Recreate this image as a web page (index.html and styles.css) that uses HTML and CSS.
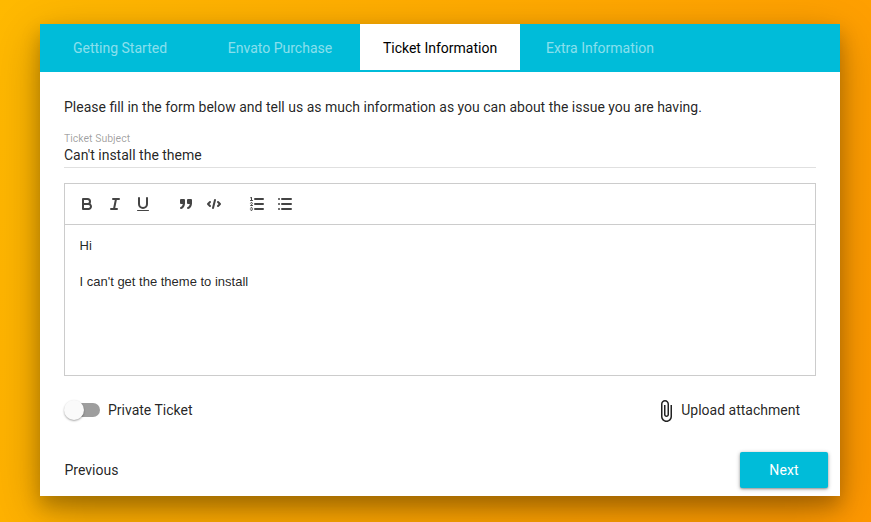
FILE: index.html
```html
<!DOCTYPE html>
<html lang="en">
<head>
<meta charset="utf-8">
<title>Ticket Information</title>
<link rel="stylesheet" href="styles.css">
</head>
<body>
<main class="card">
  <nav class="tabs">
    <a class="tab">Getting Started</a>
    <a class="tab">Envato Purchase</a>
    <a class="tab active">Ticket Information</a>
    <a class="tab">Extra Information</a>
  </nav>
  <section class="content">
    <p class="intro">Please fill in the form below and tell us as much information as you can about the issue you are having.</p>
    <div class="field">
      <div class="label">Ticket Subject</div>
      <div class="value">Can't install the theme</div>
    </div>
    <div class="editor">
      <div class="toolbar">
        <div class="group">
          <span class="tool"><svg viewBox="0 0 18 18"><path d="M5,4H9.5A2.5,2.5,0,0,1,12,6.5v0A2.5,2.5,0,0,1,9.5,9H5A0,0,0,0,1,5,9V4A0,0,0,0,1,5,4Z"/><path d="M5,9h5.5A2.5,2.5,0,0,1,13,11.5v0A2.5,2.5,0,0,1,10.500,14H5A0,0,0,0,1,5,14V9A0,0,0,0,1,5,9Z"/></svg></span>
          <span class="tool"><svg viewBox="0 0 18 18"><path d="M7 4H13M5 14H11M8 14L10 4"/></svg></span>
          <span class="tool"><svg viewBox="0 0 18 18"><path d="M5,3V9a4.012,4.012,0,0,0,4,4H9a4.012,4.012,0,0,0,4-4V3"/><rect class="fill" x="3" y="15" width="12" height="1" rx=".5"/></svg></span>
        </div>
        <div class="group">
          <span class="tool"><svg viewBox="0 0 18 18"><rect class="both" x="4" y="5" width="3" height="3"/><rect class="both" x="11" y="5" width="3" height="3"/><path class="both-even" d="M7,8c0,4.031-3,5-3,5"/><path class="both-even" d="M14,8c0,4.031-3,5-3,5"/></svg></span>
          <span class="tool"><svg viewBox="0 0 18 18"><path d="M5 7L3 9L5 11M13 7L15 9L13 11M10 5L8 13"/></svg></span>
        </div>
        <div class="group">
          <span class="tool"><svg viewBox="0 0 18 18"><path d="M7 4H15M7 9H15M7 14H15"/><path class="thin" d="M2.500 5.500H4.500"/><path class="fill" d="M3.500,6A0.500,0.500,0,0,1,3,5.500V3.085l-0.276.138A0.500,0.500,0,0,1,2.053,3c-0.124-.247-0.023-0.324.224-0.447l1-.5A0.500,0.500,0,0,1,4,2.500v3A0.500,0.500,0,0,1,3.500,6Z"/><path class="thin" d="M4.500,10.500h-2c0-.234,1.850-1.076,1.850-2.234A0.959,0.959,0,0,0,2.500,8.156"/><path class="thin" d="M2.500,14.846a0.959,0.959,0,0,0,1.850-.109A0.700,0.700,0,0,0,3.750,14a0.688,0.688,0,0,0,.6-0.736,0.959,0.959,0,0,0-1.850-.109"/></svg></span>
          <span class="tool"><svg viewBox="0 0 18 18"><path d="M6 4H15M6 9H15M6 14H15M3 4H3.010M3 9H3.010M3 14H3.010"/></svg></span>
        </div>
      </div>
      <div class="text"><p>Hi</p><p><br></p><p>I can't get the theme to install</p></div>
    </div>
    <div class="options">
      <div class="switch"><span class="track"><span class="thumb"></span></span><span>Private Ticket</span></div>
      <div class="upload"><svg class="clip" viewBox="0 0 24 24"><path d="M16.500 6v11.500c0 2.210-1.790 4-4 4s-4-1.790-4-4V5c0-1.380 1.120-2.500 2.500-2.500s2.500 1.120 2.500 2.500v10.500c0 .55-.45 1-1 1s-1-.45-1-1V6H10v9.500c0 1.380 1.120 2.500 2.500 2.500s2.500-1.120 2.500-2.500V5c0-2.210-1.790-4-4-4S7 2.790 7 5v12.500c0 3.040 2.460 5.500 5.500 5.500s5.500-2.460 5.500-5.500V6h-1.500z"/></svg><span>Upload attachment</span></div>
    </div>
  </section>
  <footer class="actions">
    <a class="previous">Previous</a>
    <button class="next">Next</button>
  </footer>
</main>
</body>
</html>
```

FILE: styles.css
```css
* { box-sizing: border-box; }
body {
  margin: 0;
  height: 522px;
  padding: 24px 31px 26px 40px;
  overflow: hidden;
  background: linear-gradient(115deg, #ffb900, #ff9800);
  font: 14px/20px Roboto, sans-serif;
  color: rgba(0, 0, 0, .87);
}
.card {
  width: 800px;
  height: 472px;
  background: #fff;
  box-shadow: 0 14px 45px rgba(0, 0, 0, .25), 0 10px 18px rgba(0, 0, 0, .22);
}
.tabs {
  display: flex;
  height: 48px;
  padding-bottom: 2px;
  background: #00bcd9;
}
.tab {
  width: 160px;
  padding-top: 14px;
  text-align: center;
  color: rgba(255, 255, 255, .55);
}
.tab.active { background: #fff; color: #000; }
.content { padding: 25px 24px 0; }
.intro { margin: 0; }
.field {
  height: 51px;
  border-bottom: 1px solid #e0e0e0;
}
.label {
  height: 29px;
  padding-top: 14px;
  font-size: 10.500px;
  line-height: 16px;
  color: rgba(0, 0, 0, .38);
}
.value { line-height: 19px; }
.editor {
  margin-top: 15px;
  height: 193px;
  border: 1px solid #ccc;
}
.toolbar {
  display: flex;
  gap: 15px;
  height: 41px;
  padding: 8px;
  border-bottom: 1px solid #ccc;
}
.group { display: flex; }
.tool { width: 28px; height: 24px; padding: 3px 5px; }
.tool svg {
  display: block;
  width: 18px;
  height: 18px;
  fill: none;
  stroke: #444;
  stroke-width: 2;
  stroke-linecap: round;
  stroke-linejoin: round;
}
.tool .fill { fill: #444; stroke: none; }
.tool .thin { stroke-width: 1; }
.tool .both, .tool .both-even { fill: #444; }
.text {
  padding: 12px 14.500px;
  font: 13px/18px "Liberation Sans", Arial, sans-serif;
}
.text p { margin: 0; }
.options {
  display: flex;
  justify-content: space-between;
  align-items: center;
  height: 24px;
  margin-top: 22px;
  padding-right: 16px;
}
.switch, .upload { display: flex; align-items: center; }
.track {
  position: relative;
  width: 34px;
  height: 14px;
  margin: 0 8px 0 2px;
  border-radius: 7px;
  background: #9e9e9e;
}
.thumb {
  position: absolute;
  left: -2px;
  top: -3px;
  width: 20px;
  height: 20px;
  border-radius: 50%;
  background: #fafafa;
  box-shadow: 0 1px 2px rgba(0, 0, 0, .35);
}
.clip { width: 24px; height: 24px; margin: 1px 3px 0 0; fill: #222; }
.actions {
  display: flex;
  justify-content: space-between;
  align-items: center;
  margin-top: 30px;
  padding: 0 12px 0 24.500px;
}
.next {
  width: 88px;
  height: 36px;
  padding: 0;
  border: 0;
  border-radius: 2px;
  background: #00bcd9;
  color: #fff;
  font: inherit;
  letter-spacing: .1px;
  box-shadow: 0 1px 4px rgba(0, 0, 0, .3), 0 1px 2px rgba(0, 0, 0, .24);
}
```
